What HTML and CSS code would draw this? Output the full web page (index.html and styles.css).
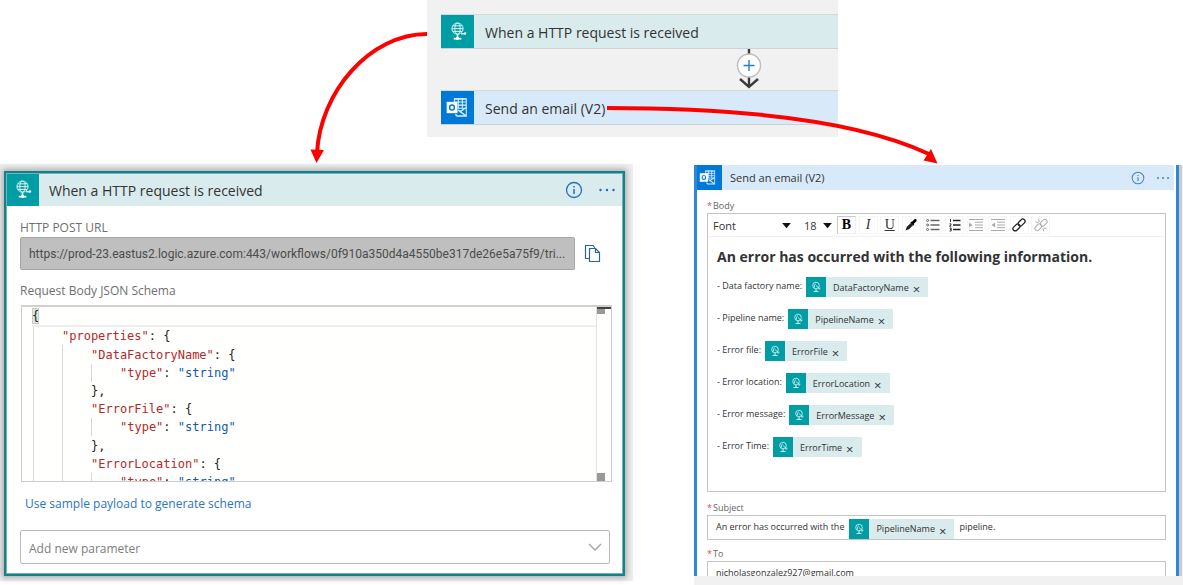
FILE: index.html
```html
<!DOCTYPE html>
<html lang="en">
<head>
<meta charset="utf-8">
<title>Logic app: HTTP request to email</title>
<link rel="stylesheet" href="styles.css">
</head>
<body>
<svg class="symbols" aria-hidden="true">
  <symbol id="globe" viewBox="0 0 32 32">
    <rect width="32" height="32" fill="#009da5"/>
    <g fill="none" stroke="#e8f8f8" stroke-width=".9">
      <circle cx="16" cy="13.200" r="5.400"/>
      <ellipse cx="16" cy="13.200" rx="2.600" ry="5.400"/>
      <path d="M10.600 13.200h10.800M11.500 10.500h9M11.500 15.900h9"/>
      <path d="M19.500 18.200h3.500" stroke-width="1.300"/>
      <path d="M16 18.500v4" stroke-width="1.600"/>
      <path d="M12.300 23h7.400" stroke-width="1.700"/>
    </g>
    <circle cx="23.300" cy="18" r="1.200" fill="#fff"/><circle cx="16" cy="22.600" r="1.600" fill="#fff"/>
  </symbol>
  <symbol id="globe-small" viewBox="0 0 20 20">
    <rect width="20" height="20" fill="#009da5"/>
    <g fill="none" stroke="#c4ecee" stroke-width=".9">
      <circle cx="10" cy="8.500" r="3.300"/>
      <path d="M8.500 10.500q-1-3 1.500-3.700M10 8.500l3.500 3.300M13.800 10.500v1.500h-1.500"/>
      <path d="M7.500 14.500h5M10 12v2.500" stroke-width="1.200"/>
    </g>
  </symbol>
  <symbol id="outlook" viewBox="0 0 32 32">
    <rect width="32" height="32" fill="#0078d7"/>
    <g fill="none" stroke="#dcefff" stroke-width="1">
      <path d="M13 7.700h11.500" stroke-width="1.600"/>
      <path d="M13 7v4M16.800 7v10M20.700 7v10M24.500 7v17M13 10.700h11.500M16 13.700h8.500M16 16.700h7"/>
      <path d="M24.500 16l-6 4-2-1.500M18.500 20l6 4.200M14 22.500l1.500 1.700h9.500" stroke-width="1.300"/>
    </g>
    <path d="M5.500 10.500h10.500v11H5.500z" fill="#fff"/>
    <ellipse cx="10.700" cy="16" rx="2.300" ry="2.500" fill="none" stroke="#0078d7" stroke-width="1.400"/>
  </symbol>
  <symbol id="info" viewBox="0 0 18 18">
    <circle cx="9" cy="9" r="7.500" fill="none" stroke="#2672bd" stroke-width="1.300"/>
    <path d="M9 8v5M9 5v1.500" stroke="#2672bd" stroke-width="1.500"/>
  </symbol>
  <symbol id="dots" viewBox="0 0 18 18">
    <g fill="#2367b0"><circle cx="2.500" cy="9" r="1.200"/><circle cx="9" cy="9" r="1.200"/><circle cx="15.500" cy="9" r="1.200"/></g>
  </symbol>
  <symbol id="caret" viewBox="0 0 10 8"><path d="M0 1h10L5 7z" fill="#111"/></symbol>
</svg>

<main class="page">
  <section class="flow">
    <div class="step step-http"><svg class="step-icon"><use href="#globe"/></svg><span>When a HTTP request is received</span></div>
    <div class="connector">
      <button class="add" aria-label="Insert a new step">
        <svg viewBox="0 0 28 41">
          <path d="M14 0v38M5 30l9 8 9-8" fill="none" stroke="#3b3b3b" stroke-width="2.400"/>
          <circle cx="14" cy="16.500" r="11.500" fill="#fff" stroke="#bdbdbd" stroke-width="1.400"/>
          <path d="M14 11v11M8.500 16.500h11" stroke="#1b80cc" stroke-width="1.400"/>
        </svg>
      </button>
    </div>
    <div class="step step-mail"><svg class="step-icon"><use href="#outlook"/></svg><span>Send an email (V2)</span></div>
  </section>

  <div class="details">
    <section class="http-area">
      <div class="http-card">
        <header class="http-head">
          <svg class="step-icon"><use href="#globe"/></svg>
          <h2>When a HTTP request is received</h2>
          <button class="tool" aria-label="Information"><svg><use href="#info"/></svg></button>
          <button class="tool" aria-label="More"><svg><use href="#dots"/></svg></button>
        </header>
        <div class="http-body">
          <label class="http-label" for="url">HTTP POST URL</label>
          <div class="url-row">
            <input id="url" class="url" readonly value="https://prod-23.eastus2.logic.azure.com:443/workflows/0f910a350d4a4550be317de26e5a75f9/tri...">
            <button class="copy" aria-label="Copy URL">
              <svg viewBox="0 0 17 19" fill="#fff" stroke="#2d6498" stroke-width="1.200">
                <path d="M6 14.500H1.500V1.500h7.500l2 2.500"/>
                <path d="M5.500 4.500h6l4 4v9h-10z"/><path d="M11.500 4.500v4h4" fill="none"/>
              </svg>
            </button>
          </div>
          <div class="http-label schema-label" id="schema-label">Request Body JSON Schema</div>
          <div class="schema" role="textbox" aria-multiline="true" aria-labelledby="schema-label">
            <div class="code">
              <div class="line first"><b class="brace">{</b></div>
              <div class="line"><i></i><span class="key">"properties"</span>: {</div>
              <div class="line"><i></i><i></i><span class="key">"DataFactoryName"</span>: {</div>
              <div class="line"><i></i><i></i><i></i><span class="key">"type"</span>:&nbsp;<span class="str">"string"</span></div>
              <div class="line"><i></i><i></i>},</div>
              <div class="line"><i></i><i></i><span class="key">"ErrorFile"</span>: {</div>
              <div class="line"><i></i><i></i><i></i><span class="key">"type"</span>:&nbsp;<span class="str">"string"</span></div>
              <div class="line"><i></i><i></i>},</div>
              <div class="line"><i></i><i></i><span class="key">"ErrorLocation"</span>: {</div>
              <div class="line"><i></i><i></i><i></i><span class="key">"type"</span>:&nbsp;<span class="str">"string"</span></div>
            </div>
            <div class="ruler"></div>
          </div>
          <a class="sample" href="#schema-label">Use sample payload to generate schema</a>
          <div class="pick param">
            <select aria-label="Add new parameter"><option>Add new parameter</option></select>
            <svg viewBox="0 0 14 8"><path d="M1 1l6 6 6-6" fill="none" stroke="#a3a3a3" stroke-width="1.300"/></svg>
          </div>
        </div>
      </div>
    </section>

    <section class="mail-area">
      <div class="mail-card">
        <header class="mail-head">
          <svg class="mail-icon"><use href="#outlook"/></svg>
          <h2>Send an email (V2)</h2>
          <button class="tool" aria-label="Information"><svg><use href="#info"/></svg></button>
          <button class="tool" aria-label="More"><svg><use href="#dots"/></svg></button>
        </header>
        <div class="mail-body">
          <div class="mail-label" id="body-label"><em>*</em>Body</div>
          <div class="editor">
            <div class="toolbar">
              <div class="pick font"><select aria-label="Font"><option>Font</option></select><svg><use href="#caret"/></svg></div>
              <div class="pick size"><select aria-label="Font size"><option>18</option></select><svg><use href="#caret"/></svg></div>
              <div class="formats">
                <button class="fmt bold">B</button>
                <button class="fmt italic">I</button>
                <button class="fmt under">U</button>
                <button class="fmt" aria-label="Color"><svg viewBox="0 0 14 14"><path d="M1.500 12.500l1.200-3.500L7 4.800 9.300 7 5 11.300z" fill="#222"/><path d="M6.500 4.500l3 3 .8-.8-.7-.7 2.600-2.500c1.400-1.800-.6-3.200-2-1.900L7.700 4l-.5-.4z" fill="#000"/></svg></button>
                <button class="fmt" aria-label="Bulleted list"><svg viewBox="0 0 14 14"><path d="M4.500 2.500h9M4.500 7h9M4.500 11.500h9" stroke="#666" stroke-width="1.300"/><g fill="none" stroke="#444" stroke-width=".8"><circle cx="1.600" cy="2.500" r="1"/><circle cx="1.600" cy="7" r="1"/><circle cx="1.600" cy="11.500" r="1"/></g></svg></button>
                <button class="fmt" aria-label="Numbered list"><svg viewBox="0 0 14 14"><path d="M5 2.500h7.500M5 7h7.500M5 11.500h7.500" stroke="#222" stroke-width="1.500"/><path d="M2.500 1v3M1.500 5.800h1.500v1.300l-1.500 1h1.800M1.500 10h1.700v3H1.500M2 11.500h1" fill="none" stroke="#222" stroke-width=".9"/></svg></button>
                <button class="fmt" aria-label="Indent"><svg viewBox="0 0 14 14"><path d="M0 1.500h14M6 4.200h8M6 7h8M6 9.700h8M0 12.500h14" stroke="#aaa"/><path d="M0 4.500v5L3.500 7z" fill="#aaa"/></svg></button>
                <button class="fmt" aria-label="Outdent"><svg viewBox="0 0 14 14"><path d="M0 1.500h14M6 4.200h8M6 7h8M6 9.700h8M0 12.500h14" stroke="#aaa"/><path d="M4 4.500v5L.5 7z" fill="#aaa"/></svg></button>
                <button class="fmt" aria-label="Link"><svg viewBox="0 0 14 14" fill="none" stroke="#222" stroke-width="1.300"><rect x="5.500" y="2.300" width="8" height="4.500" rx="2.200" transform="rotate(-45 9.500 4.500)"/><rect x=".5" y="7.200" width="8" height="4.500" rx="2.200" transform="rotate(-45 4.500 9.500)"/></svg></button>
                <button class="fmt" aria-label="Unlink"><svg viewBox="0 0 14 14" fill="none" stroke="#aaa"><rect x="6" y="2.500" width="7.500" height="4.500" rx="2.200" transform="rotate(-45 9.700 4.700)"/><rect x=".5" y="7" width="7.500" height="4.500" rx="2.200" transform="rotate(-45 4.300 9.300)"/><path d="M1.500 4l3 .6M4.500 1l.8 3M9.500 10l3 .6M9 10.500l.7 2.800"/></svg></button>
              </div>
            </div>
            <div class="message" role="textbox" aria-multiline="true" aria-labelledby="body-label">
              <h3>An error has occurred with the following information.</h3>
              <p><span>- Data factory name:</span><span class="chip"><svg><use href="#globe-small"/></svg>DataFactoryName<button aria-label="Remove DataFactoryName">×</button></span></p>
              <p><span>- Pipeline name:</span><span class="chip"><svg><use href="#globe-small"/></svg>PipelineName<button aria-label="Remove PipelineName">×</button></span></p>
              <p><span>- Error file:</span><span class="chip"><svg><use href="#globe-small"/></svg>ErrorFile<button aria-label="Remove ErrorFile">×</button></span></p>
              <p><span>- Error location:</span><span class="chip"><svg><use href="#globe-small"/></svg>ErrorLocation<button aria-label="Remove ErrorLocation">×</button></span></p>
              <p><span>- Error message:</span><span class="chip"><svg><use href="#globe-small"/></svg>ErrorMessage<button aria-label="Remove ErrorMessage">×</button></span></p>
              <p><span>- Error Time:</span><span class="chip"><svg><use href="#globe-small"/></svg>ErrorTime<button aria-label="Remove ErrorTime">×</button></span></p>
            </div>
          </div>
          <div class="mail-label" id="subject-label"><em>*</em>Subject</div>
          <div class="field" role="textbox" aria-labelledby="subject-label"><span>An error has occurred with the</span><span class="chip"><svg><use href="#globe-small"/></svg>PipelineName<button aria-label="Remove PipelineName">×</button></span><span>pipeline.</span></div>
          <label class="mail-label" for="to"><em>*</em>To</label>
          <input id="to" class="field" value="nicholasgonzalez927@gmail.com">
        </div>
      </div>
    </section>
  </div>

  <svg class="arrows" viewBox="0 0 1183 585" aria-hidden="true">
    <g fill="none" stroke="#fe0000" stroke-width="4">
      <path d="M427 34C370 34 320 92 317 153"/>
      <path d="M607 108C730 108 855 119 929 154"/>
    </g>
    <path d="M310.500 149.500l13.500.5-7.500 13zM931 149L937.500 163.500 923.500 160.500z" fill="#fe0000"/>
  </svg>
</main>
</body>
</html>
```

FILE: styles.css
```css
* { box-sizing: border-box; }
body { margin: 0; background: #fff; color: #333; font-family: "Open Sans", "Noto Sans", sans-serif; }
h2, h3, p { margin: 0; font-weight: 400; }
button, input, select { font: inherit; color: inherit; }
button { padding: 0; border: 0; background: none; }
svg { display: block; }
em { font-style: normal; }
.symbols { position: absolute; width: 0; height: 0; }

.page { position: relative; height: 100vh; min-height: 585px; overflow: hidden; }
.arrows { position: absolute; top: 0; left: 0; width: 100%; pointer-events: none; }

/* Overview of the two steps */
.flow { width: 34.7%; height: 137px; margin-left: 36.1%; padding: 14px 0 0 14px; background: #f1f1f1; }
.step { display: flex; align-items: center; gap: 11px; height: 35px; border-top: 1px solid #d5d8d8; border-bottom: 1px solid #ccd3d5; font-size: 14px; }
.step span, .http-head h2 { padding-top: 2px; }
.step-http { background: #d9ebed; }
.step-mail { background: #d8eaf9; }
.step-icon { flex: none; width: 33px; height: 33px; }
.connector { height: 41px; padding-left: 294px; }
.add { display: block; width: 28px; height: 41px; }
.add svg { width: 28px; height: 41px; }

.details { display: grid; grid-template-columns: 633fr 489fr; column-gap: 61px; padding-top: 27px; }

/* HTTP trigger */
.http-area { align-self: start; padding: 7px 8px 5px 4px; background: #efefef; }
.http-card { border: 2px solid #13818c; outline: 1px solid #75b2b8; outline-offset: -3px; background: #fff; box-shadow: 0 0 6px 2px #aaa; }
.http-head { display: flex; align-items: center; height: 33px; padding-right: 7px; background: #d9ebed; font-size: 14px; }
.http-head h2 { flex: 1; margin-left: 10px; font-size: 14px; }
.tool { width: 18px; height: 18px; }
.tool svg { width: 100%; height: 100%; }
.http-head .tool + .tool { margin-left: 15px; }
.http-body { padding: 13px 12px 10px 14px; font-size: 12px; }
.http-label { display: block; height: 18px; color: #707070; line-height: 18px; }
.url-row { display: flex; align-items: center; gap: 9px; }
.url { flex: 1; min-width: 0; height: 33px; padding: 0 8px; border: 1px solid #a7a7a7; border-radius: 2px; background: #bfbfbf; color: #4c4c4c; font-family: Roboto, "Open Sans", sans-serif; font-size: 12px; text-overflow: ellipsis; }
.copy { width: 17px; height: 19px; margin-right: 10px; }
.copy svg { width: 100%; height: 100%; }
.schema-label { margin-top: 12px; }
.schema { display: flex; height: 177px; margin-top: 5px; margin-right: -1px; margin-left: 1px; overflow: hidden; border: 1px solid #ccc; border-top: 2px solid #d0d0d0; background: #fffffd; }
.code { display: flex; flex: 1; flex-direction: column; height: 184px; padding-left: 11px; font-family: "DejaVu Sans Mono", "Liberation Mono", monospace; font-size: 12px; color: #222; }
.line { display: flex; flex: 1; align-items: center; line-height: 16px; white-space: pre; }
.line i { align-self: stretch; width: 29px; border-left: 1px solid #d8d8d8; }
.first { margin-left: -1px; border-bottom: 2px solid #eee; }
.brace { font-weight: 400; background: #dde8dd; outline: 1px solid #c3cfc3; outline-offset: -1px; }
.key { color: #b5282d; }
.str { color: #1059b0; }
.ruler { width: 15px; border-left: 1px solid #e2e2e2; background: linear-gradient(#444, #444) 0 0 / 14px 2px no-repeat, linear-gradient(#999, #999) 0 2px / 8px 5px no-repeat, linear-gradient(#999, #999) 0 100% / 8px 8px no-repeat; }
.sample { display: block; margin: 13px 0 17px 5px; color: #2c74c4; font-size: 12px; line-height: 18px; text-decoration: none; }

.pick { display: grid; align-items: center; }
.pick select { grid-area: 1 / 1; width: 100%; height: 100%; margin: 0; border: 0; background: transparent; appearance: none; }
.pick svg { grid-area: 1 / 1; justify-self: end; pointer-events: none; }
.param { height: 34px; margin-right: 1px; border: 1px solid #bbb; border-radius: 2px; }
.param select { padding: 3px 8px 0; color: #7d7d7d; font-size: 12px; }
.param svg { width: 14px; height: 8px; margin-right: 7px; }

/* Email action */
.mail-area { height: 421px; padding: 1px 4px 0 0; background: linear-gradient(#fff, #fff) 0 0 / 100% 1px no-repeat, #f1f1f1; }
.mail-card { height: 411px; overflow: hidden; border: 3px solid #2f88d6; border-width: 0 3px; background: #fff; box-shadow: 3px 0 0 #ccc; }
.mail-head { display: flex; align-items: center; height: 25px; margin: 0 2px 0 -3px; padding-right: 4px; background: #d8eaf9; }
.mail-icon { width: 28px; height: 25px; background: #0078d7; }
.mail-head h2 { flex: 1; margin-left: 8px; font-size: 11px; }
.mail-head .tool { width: 14px; height: 14px; opacity: .85; }
.mail-head .tool + .tool { margin-left: 11px; }
.mail-body { padding: 9px 10px 0; font-size: 9px; }
.mail-label { display: block; height: 14px; color: #666; font-size: 9px; line-height: 14px; }
.mail-label em { margin-right: 1px; color: #e8444c; }
.editor { height: 279px; margin-bottom: 9px; border: 1px solid #c4c4c4; }
.toolbar { display: flex; align-items: center; height: 23px; border-bottom: 1px solid #f1f1f1; font-size: 11px; }
.toolbar svg { width: 14px; height: 14px; margin: auto; }
.toolbar .pick { height: 18px; padding: 0 5px; }
.toolbar .pick svg { width: 9px; height: 7px; margin: 0; }
.toolbar select { padding: 0; }
.toolbar .font { width: 88px; }
.toolbar .size { width: 38px; margin-left: 3px; }
.formats { display: grid; grid-template-columns: repeat(10, 1fr); width: 216px; }
.fmt { width: 19px; height: 18px; border: 1px solid #f6f6f6; font-family: "Liberation Serif", serif; font-size: 14px; line-height: 16px; }
.bold { border-color: #c8c8c8 #eee #eee #c8c8c8; font-weight: 700; color: #000; }
.italic { font-style: italic; }
.under { text-decoration: underline; }
.message { padding: 8px 9px; }
.message h3 { margin-bottom: 8px; font-size: 14px; font-weight: 700; line-height: 24px; }
.message p { display: flex; align-items: center; gap: 4px; height: 20px; margin-bottom: 12px; }
.message p > span:first-child { padding-bottom: 3px; }
.chip { display: flex; align-items: center; height: 20px; padding-right: 8px; background: #d9ebed; }
.chip svg { width: 20px; height: 20px; margin-right: 7px; }
.chip button { margin: 4px 0 0 4px; font-size: 13px; line-height: 12px; }
.field { display: flex; align-items: center; gap: 5px; width: 100%; height: 25px; margin-bottom: 7px; padding: 0 8px; border: 1px solid #c4c4c4; background: #fff; font-size: 9px; }
.field > span:not(.chip) { padding-bottom: 3px; }
.field .chip { margin-top: 2px; }
input.field { padding-bottom: 2px; }
```
